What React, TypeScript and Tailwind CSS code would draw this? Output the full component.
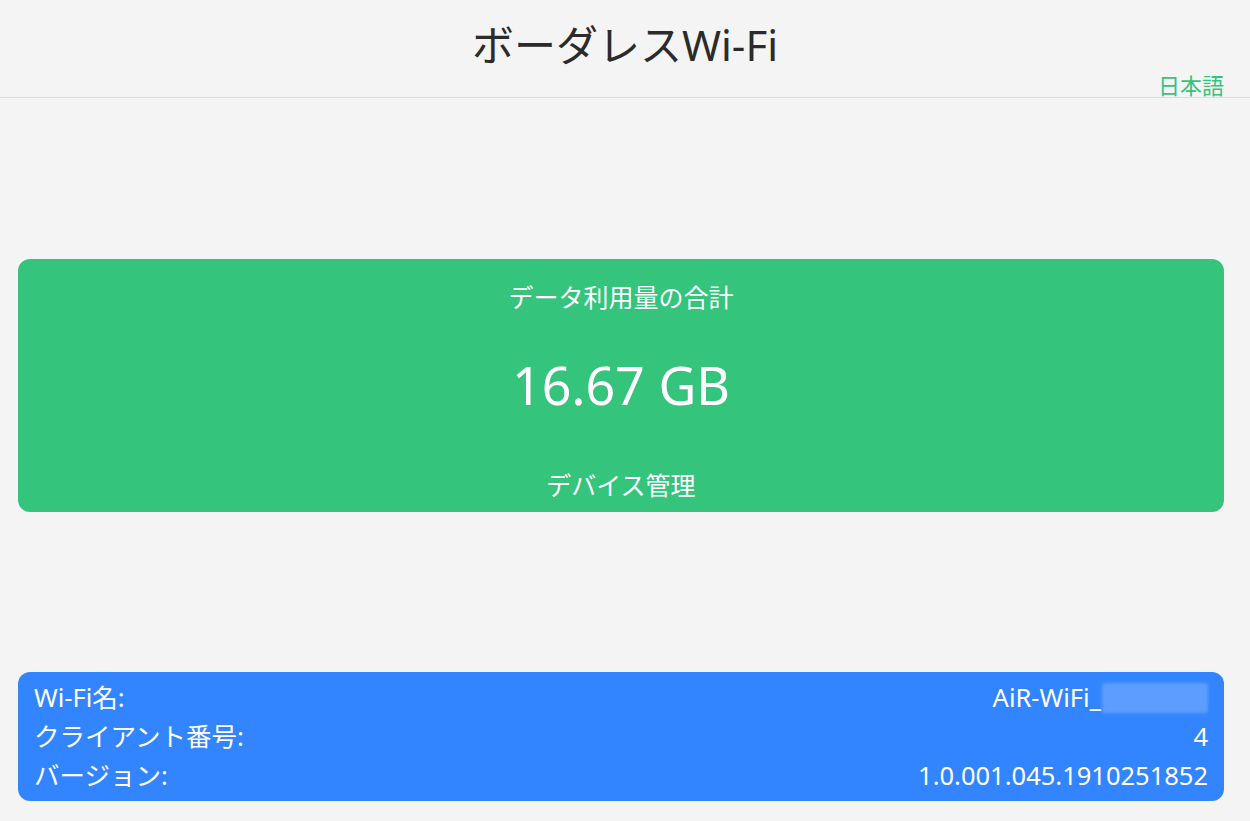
import React from "react"

const font = { fontFamily: '"Noto Sans", "Noto Sans CJK JP", sans-serif' }

const rows = [
  { label: "Wi-Fi名:", value: "AiR-WiFi_", masked: true },
  { label: "クライアント番号:", value: "4" },
  { label: "バージョン:", value: "1.0.001.045.1910251852" },
]

export default function App() {
  return (
    <div className="min-h-screen bg-[#f4f4f4]" style={font}>
      {/* Header */}
      <header className="relative h-[98px] border-b border-[#dcdcdc]">
        <h1 className="pt-[16px] text-center text-[42px] leading-[58px] text-[#2b2b2b]">ボーダレスWi-Fi</h1>
        <div className="absolute right-[26px] top-[70px] text-[22px] leading-[30px] text-[#35c47c]">日本語</div>
      </header>

      <main className="pl-[18px] pr-[26px] pb-[20px]">
        {/* Usage card */}
        <section className="mt-[161px] flex h-[253px] flex-col items-center rounded-[12px] bg-[#34c47c] text-white">
          <div className="mt-[22px] text-[25px] leading-[32px]">データ利用量の合計</div>
          <div className="mt-[39px] text-[52px] leading-[66px]">16.67 GB</div>
          <div className="mt-[51px] text-[25px] leading-[32px]">デバイス管理</div>
        </section>

        {/* Device info */}
        <section className="mt-[160px] rounded-[12px] bg-[#3385ff] px-[16px] py-[6px] text-white">
          {rows.map((row) => (
            <div key={row.label} className="flex items-center justify-between text-[25.5px] leading-[39px]">
              <span>{row.label}</span>
              <span className="flex items-center">
                {row.value}
                {row.masked && <span className="ml-[1px] h-[30px] w-[106px] rounded-[3px] bg-[#5d9dff] blur-[1.5px]" />}
              </span>
            </div>
          ))}
        </section>
      </main>
    </div>
  )
}
